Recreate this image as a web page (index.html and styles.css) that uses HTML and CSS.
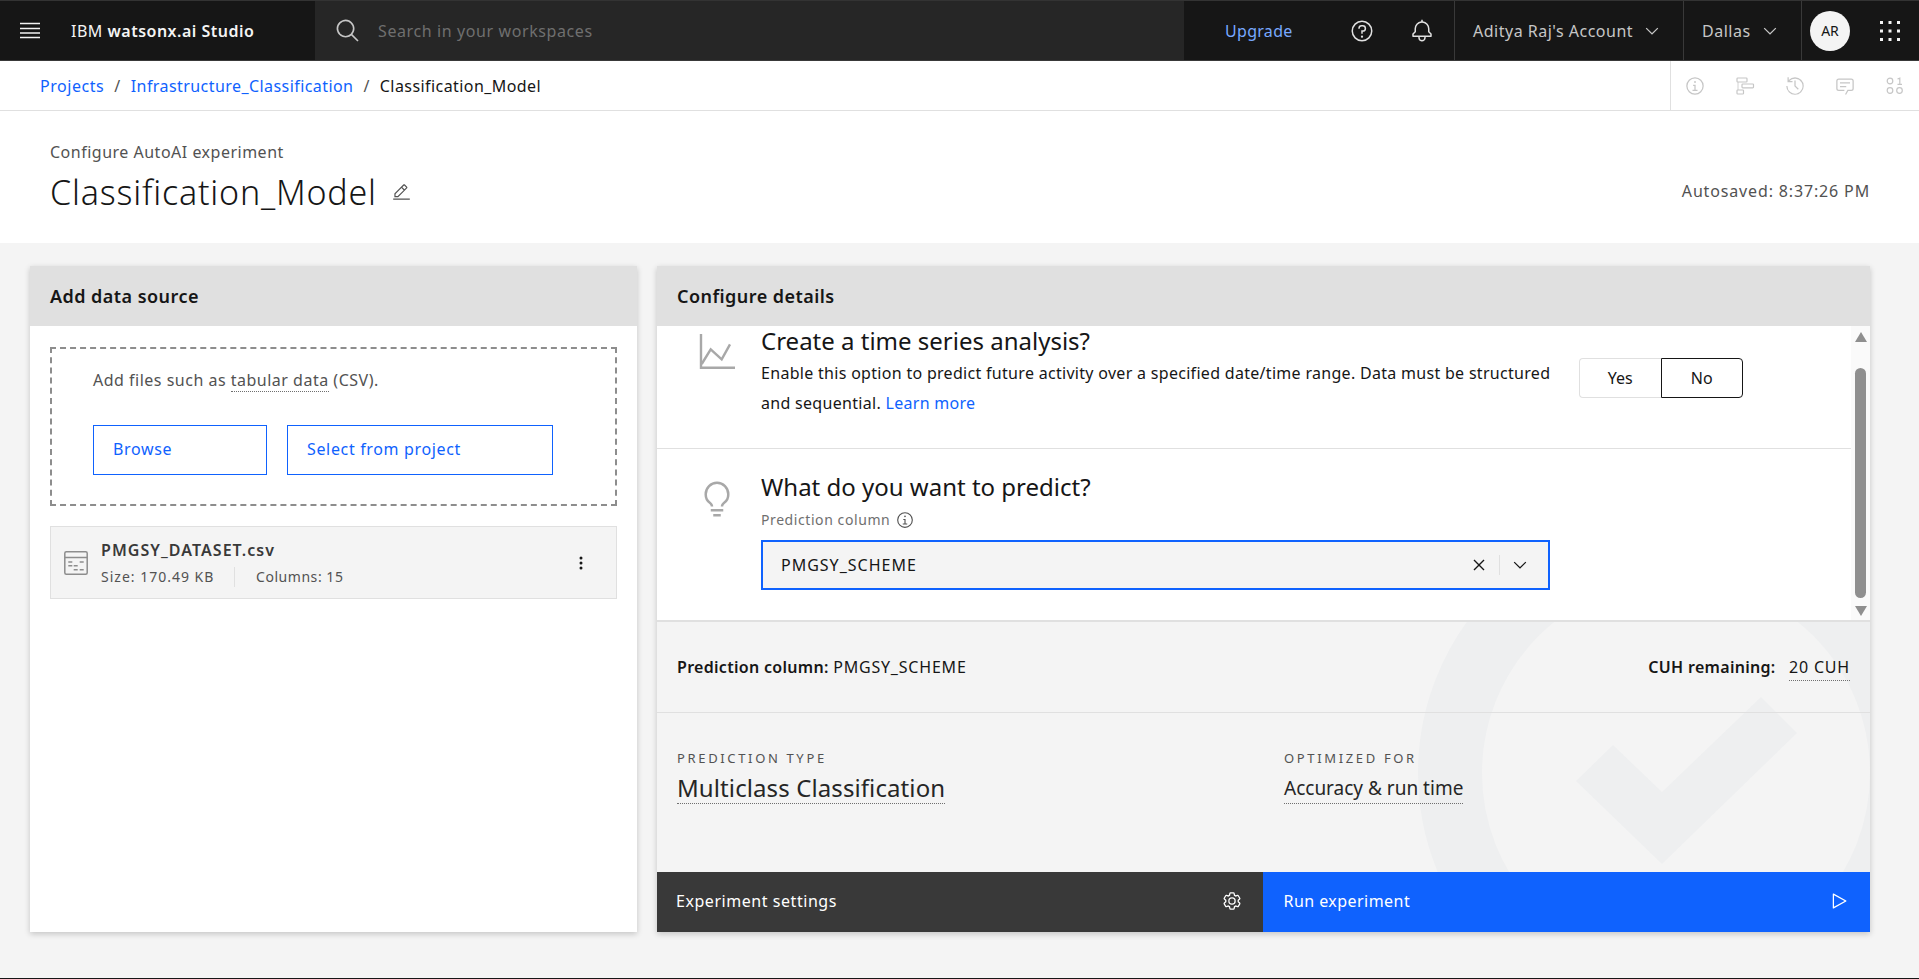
FILE: index.html
```html
<!DOCTYPE html>
<html lang="en">
<head>
<meta charset="utf-8">
<title>Configure AutoAI experiment</title>
<link rel="stylesheet" href="styles.css">
</head>
<body>
<header class="topbar">
  <div class="brand">
    <svg class="ico20" viewBox="0 0 20 20"><path d="M0 2.500h20M0 7.500h20M0 12h20M0 16.500h20" stroke="#f4f4f4" stroke-width="1.300"/></svg>
    <span class="brand-name">IBM <b>watsonx.ai Studio</b></span>
  </div>
  <div class="search">
    <svg class="ico26" viewBox="0 0 32 32" fill="#c6c6c6"><path d="M29 27.586l-7.552-7.552a11.018 11.018 0 1 0-1.414 1.414L27.586 29ZM4 13a9 9 0 1 1 9 9A9.010 9.010 0 0 1 4 13Z"/></svg>
    <span class="placeholder">Search in your workspaces</span>
  </div>
  <div class="top-right">
    <span class="upgrade">Upgrade</span>
    <svg class="ico24 help" viewBox="0 0 32 32" fill="#e0e0e0"><path d="M16,2A14,14,0,1,0,30,16,14,14,0,0,0,16,2Zm0,26A12,12,0,1,1,28,16,12,12,0,0,1,16,28Z"/><circle cx="16" cy="23.500" r="1.500"/><path d="M17,8H15.500A4.490,4.490,0,0,0,11,12.500V13h2v-.5A2.500,2.500,0,0,1,15.500,10H17a2.500,2.500,0,0,1,0,5H15v4.500h2V17a4.500,4.500,0,0,0,0-9Z"/></svg>
    <svg class="ico24 bell" viewBox="0 0 32 32" fill="#e0e0e0"><path d="M28.707,19.293,26,16.586V13a10.014,10.014,0,0,0-9-9.949V1H15V3.051A10.014,10.014,0,0,0,6,13v3.586L3.293,19.293A1,1,0,0,0,3,20v3a1,1,0,0,0,1,1h7v.777a5.152,5.152,0,0,0,4.500,5.199A5.006,5.006,0,0,0,21,25V24h7a1,1,0,0,0,1-1V20A1,1,0,0,0,28.707,19.293ZM19,25a3,3,0,0,1-6,0V24h6Zm8-3H5V20.414L7.707,17.707A1,1,0,0,0,8,17V13a8,8,0,0,1,16,0v4a1,1,0,0,0,.293.707L27,20.414Z"/></svg>
    <div class="tcell account"><span>Aditya Raj's Account</span><svg class="ico20" viewBox="0 0 32 32" fill="#c6c6c6"><path d="M16 22 6 12l1.400-1.400 8.600 8.600 8.600-8.600L26 12z"/></svg></div>
    <div class="tcell region"><span>Dallas</span><svg class="ico20" viewBox="0 0 32 32" fill="#c6c6c6"><path d="M16 22 6 12l1.400-1.400 8.600 8.600 8.600-8.600L26 12z"/></svg></div>
    <div class="tcell user"><span class="avatar">AR</span>
      <svg class="ico20 apps" viewBox="0 0 20 20" fill="#f4f4f4"><path d="M0 0h3v3H0zM8.500 0h3v3h-3zM17 0h3v3h-3zM0 8.500h3v3H0zM8.500 8.500h3v3h-3zM17 8.500h3v3h-3zM0 17h3v3H0zM8.500 17h3v3h-3zM17 17h3v3h-3z"/></svg>
    </div>
  </div>
</header>

<nav class="crumbbar">
  <div class="crumbs"><a>Projects</a><i>/</i><a>Infrastructure_Classification</a><i>/</i><span>Classification_Model</span></div>
  <div class="tools">
    <svg class="ico20" viewBox="0 0 32 32" fill="#c6c6c6"><path d="M17 22v-8h-4v2h2v6h-3v2h8v-2h-3zM16 8a1.500 1.500 0 1 0 1.500 1.500A1.500 1.500 0 0 0 16 8z"/><path d="M16 30a14 14 0 1 1 14-14 14 14 0 0 1-14 14Zm0-26a12 12 0 1 0 12 12A12 12 0 0 0 16 4Z"/></svg>
    <svg class="ico20" viewBox="0 0 20 20" fill="none" stroke="#c6c6c6" stroke-width="1.200"><rect x="2" y="2" width="10" height="4" rx=".8"/><rect x="7" y="8" width="11.500" height="3.800" rx=".8"/><rect x="2" y="14" width="6.500" height="4" rx=".8"/><path d="M3 6v8" stroke-width=".8"/></svg>
    <svg class="ico20" viewBox="0 0 32 32" fill="#c6c6c6"><path d="M20.590 22 15 16.410V7h2v8.580l5 5.010L20.590 22z"/><path d="M16 2A13.940 13.940 0 0 0 6 6.230V2H4v8h8V8H7.260A12 12 0 1 1 4 16H2A14 14 0 1 0 16 2Z"/></svg>
    <svg class="ico20" viewBox="0 0 32 32" fill="#c6c6c6"><path d="M17.740 30 16 29l4-7h6a2 2 0 0 0 2-2V8a2 2 0 0 0-2-2H6a2 2 0 0 0-2 2v12a2 2 0 0 0 2 2h9v2H6a4 4 0 0 1-4-4V8a4 4 0 0 1 4-4h20a4 4 0 0 1 4 4v12a4 4 0 0 1-4 4h-4.840Z"/><path d="M8 10h16v2H8zM8 16h10v2H8z"/></svg>
    <svg class="ico20" viewBox="0 0 20 20" fill="none" stroke="#c6c6c6" stroke-width="1.200"><circle cx="5" cy="5" r="2.800"/><path d="M12.500 3 14.800 2.200v6M12.500 8.300h4.500"/><circle cx="5" cy="14.500" r="2.800"/><circle cx="14.500" cy="14.500" r="2.800"/></svg>
  </div>
</nav>

<section class="pagehead">
  <div>
    <div class="eyebrow">Configure AutoAI experiment</div>
    <div class="titlerow">
      <h1>Classification_Model</h1>
      <svg class="ico19" viewBox="0 0 32 32" fill="#525252"><path d="M2 26h28v2H2zM25.400 9c.8-.8.8-2 0-2.800l-3.600-3.600c-.8-.8-2-.8-2.800 0l-15 15V24h6.400l15-15zm-5-5L24 7.600l-3 3L17.400 7l3-3zM6 22v-3.600l10-10 3.600 3.600-10 10H6z"/></svg>
    </div>
  </div>
  <div class="autosaved">Autosaved: 8:37:26 PM</div>
</section>

<main class="workspace">
  <section class="card left">
    <h2 class="cardhead">Add data source</h2>
    <div class="leftbody">
      <div class="dropzone">
        <p>Add files such as <span class="dotted">tabular data</span> (CSV).</p>
        <div class="btns"><button class="ghost browse">Browse</button><button class="ghost select">Select from project</button></div>
      </div>
      <div class="file">
        <svg class="fileicon" viewBox="0 0 24 24" fill="none" stroke="#8d8d8d" stroke-width="1.500"><rect x=".8" y=".8" width="22.400" height="22.400" rx="1.500"/><path d="M1 6.500h22"/><path d="M4.300 11h4M15.700 11h4M4.300 14.800h4M9.700 14.800h4M9.700 18.800h4M15.700 18.800h4"/></svg>
        <div class="fileinfo">
          <div class="fname">PMGSY_DATASET.csv</div>
          <div class="fmeta"><span class="fsize">Size: 170.49 KB</span><span class="fcols">Columns: 15</span></div>
        </div>
        <svg class="ico20 kebab" viewBox="0 0 32 32" fill="#161616"><circle cx="16" cy="8" r="2.400"/><circle cx="16" cy="16" r="2.400"/><circle cx="16" cy="24" r="2.400"/></svg>
      </div>
    </div>
  </section>

  <section class="card right">
    <h2 class="cardhead">Configure details</h2>
    <div class="scroller">
      <div class="scrollcontent">
        <div class="opt first">
          <svg class="opticon chart" viewBox="0 0 36 36" fill="none" stroke="#a8a8a8" stroke-width="2.400"><path d="M2 0v33.700h34"/><path d="M2.700 30 11.700 15.300 22.700 25.300 31 10.300"/></svg>
          <div class="optmain">
            <h3>Create a time series analysis?</h3>
            <p>Enable this option to predict future activity over a specified date/time range. Data must be structured<br>and sequential. <a>Learn more</a></p>
          </div>
          <div class="toggle"><span class="yes">Yes</span><span class="no">No</span></div>
        </div>
        <div class="opt second">
          <svg class="bulb" viewBox="0 0 32 32" fill="#a8a8a8"><path d="M11 24h10v2H11zm2 4h6v2h-6zm3-26A10 10 0 0 0 6 12a9.190 9.190 0 0 0 3.460 7.620c1 .93 1.540 1.460 1.540 2.380h2c0-1.840-1.110-2.870-2.190-3.860A7.200 7.200 0 0 1 8 12a8 8 0 0 1 16 0 7.200 7.200 0 0 1-2.820 6.140c-1.070 1-2.180 2-2.180 3.860h2c0-.92.53-1.450 1.540-2.390A9.180 9.180 0 0 0 26 12 10 10 0 0 0 16 2Z"/></svg>
          <div class="optmain">
            <h3>What do you want to predict?</h3>
            <div class="fieldlabel">Prediction column
              <svg class="ico18" viewBox="0 0 32 32" fill="#525252"><path d="M17 22v-8h-4v2h2v6h-3v2h8v-2h-3zM16 8a1.500 1.500 0 1 0 1.500 1.500A1.500 1.500 0 0 0 16 8z"/><path d="M16 30a14 14 0 1 1 14-14 14 14 0 0 1-14 14Zm0-26a12 12 0 1 0 12 12A12 12 0 0 0 16 4Z"/></svg>
            </div>
            <div class="combo">
              <span class="comboval">PMGSY_SCHEME</span>
              <svg class="ico22" viewBox="0 0 32 32" fill="#161616"><path d="M17.414 16 24 9.414 22.586 8 16 14.586 9.414 8 8 9.414 14.586 16 8 22.586 9.414 24 16 17.414 22.586 24 24 22.586 17.414 16z"/></svg>
              <span class="combosep"></span>
              <svg class="ico20 combochev" viewBox="0 0 32 32" fill="#161616"><path d="M16 22 6 12l1.400-1.400 8.600 8.600 8.600-8.600L26 12z"/></svg>
            </div>
          </div>
        </div>
      </div>
      <div class="scrollbar">
        <span class="arrow up"></span>
        <span class="thumb"></span>
        <span class="arrow down"></span>
      </div>
    </div>
    <div class="summary">
      <svg class="watermark" viewBox="0 0 1213 250"><circle cx="1019" cy="151" r="226" fill="none" stroke="#eeeff0" stroke-width="64"/><path d="M1104 75l36 36-135 131-86-83 37-36 49 47z" fill="#eeeff0"/></svg>
      <div class="sumrow">
        <div><b>Prediction column:</b> <span class="mono">PMGSY_SCHEME</span></div>
        <div class="cuh"><b>CUH remaining:</b> <span class="dotted mono">20 CUH</span></div>
      </div>
      <div class="sumgrid">
        <div class="sumcol">
          <div class="sumlabel">PREDICTION TYPE</div>
          <div class="sumvalue big"><span class="dotted">Multiclass Classification</span></div>
        </div>
        <div class="sumcol">
          <div class="sumlabel">OPTIMIZED FOR</div>
          <div class="sumvalue"><span class="dotted">Accuracy &amp; run time</span></div>
        </div>
      </div>
    </div>
    <div class="actions">
      <button class="action settings"><span>Experiment settings</span>
        <svg class="ico20" viewBox="0 0 32 32" fill="#fff"><path d="M27,16.760c0-.25,0-.5,0-.76s0-.51,0-.77l1.920-1.680A2,2,0,0,0,29.300,11L26.940,7a2,2,0,0,0-1.730-1,2,2,0,0,0-.64.1l-2.430.82a11.350,11.350,0,0,0-1.310-.75l-.51-2.520a2,2,0,0,0-2-1.610H13.640a2,2,0,0,0-2,1.610l-.51,2.520a11.480,11.480,0,0,0-1.320.75L7.430,6.060A2,2,0,0,0,6.790,6,2,2,0,0,0,5.060,7L2.700,11a2,2,0,0,0,.41,2.510L5,15.240c0,.25,0,.5,0,.76s0,.51,0,.77L3.110,18.450A2,2,0,0,0,2.700,21L5.060,25a2,2,0,0,0,1.730,1,2,2,0,0,0,.64-.1l2.430-.82a11.350,11.350,0,0,0,1.310.75l.51,2.520a2,2,0,0,0,2,1.610h4.720a2,2,0,0,0,2-1.610l.51-2.520a11.480,11.480,0,0,0,1.320-.75l2.420.82a2,2,0,0,0,.64.1,2,2,0,0,0,1.730-1L29.300,21a2,2,0,0,0-.41-2.510ZM25.210,24l-3.430-1.160a8.860,8.860,0,0,1-2.710,1.570L18.360,28H13.640l-.71-3.550a9.360,9.360,0,0,1-2.700-1.570L6.790,24,4.430,20l2.720-2.400a8.900,8.900,0,0,1,0-3.130L4.430,12,6.790,8l3.430,1.160a8.860,8.860,0,0,1,2.710-1.570L13.640,4h4.720l.71,3.550a9.360,9.360,0,0,1,2.700,1.570L25.210,8,27.570,12l-2.720,2.400a8.900,8.900,0,0,1,0,3.130L27.570,20Z"/><path d="M16,22a6,6,0,1,1,6-6A5.940,5.940,0,0,1,16,22Zm0-10a3.910,3.910,0,0,0-4,4,3.910,3.910,0,0,0,4,4,3.910,3.910,0,0,0,4-4A3.910,3.910,0,0,0,16,12Z"/></svg>
      </button>
      <button class="action run"><span>Run experiment</span>
        <svg class="ico20" viewBox="0 0 32 32" fill="#fff"><path d="M7 28a1 1 0 0 1-1-1V5a1 1 0 0 1 1.482-.876l20 11a1 1 0 0 1 0 1.752l-20 11A1 1 0 0 1 7 28ZM8 6.691v18.618L24.925 16Z"/></svg>
      </button>
    </div>
  </section>
</main>
</body>
</html>
```
FILE: styles.css
```css
* { box-sizing: border-box; }
html, body { margin: 0; height: 979px; overflow: hidden; }
body {
  display: flex; flex-direction: column;
  font-family: "Noto Sans", "Open Sans", sans-serif;
  font-size: 16px; letter-spacing: .5px; color: #161616; background: #f4f4f4;
  border-bottom: 1px solid #161616;
}
h1, h2, h3, p { margin: 0; font-weight: 400; }
button { font: inherit; letter-spacing: inherit; background: none; border: 0; padding: 0; text-align: left; }
svg { display: block; flex: none; }
.ico18 { width: 18px; height: 18px; }
.ico19 { width: 19px; height: 19px; }
.ico20 { width: 20px; height: 20px; }
.ico22 { width: 22px; height: 22px; }
.ico24 { width: 24px; height: 24px; }
.ico26 { width: 26px; height: 26px; }

.topbar { height: 61px; flex: none; display: flex; background: #161616; border-top: 1px solid #333; border-bottom: 1px solid #393939; color: #f4f4f4; }
.brand { width: 315px; display: flex; align-items: center; padding-left: 20px; gap: 31px; }
.brand-name { white-space: nowrap; }
.brand-name b { font-weight: 600; }
.search { width: 869px; background: #262626; display: flex; align-items: center; padding-left: 20px; gap: 17px; }
.placeholder { color: #6f6f6f; letter-spacing: .6px; white-space: nowrap; }
.top-right { flex: 1; display: flex; align-items: center; height: 100%; padding-left: 41px; }
.upgrade { color: #78a9ff; width: 66px; letter-spacing: .3px; white-space: nowrap; }
.help { margin-left: 59px; }
.bell { margin-left: 36px; }
.tcell { height: 100%; display: flex; align-items: center; border-left: 1px solid #393939; color: #c6c6c6; white-space: nowrap; }
.account { margin-left: 20px; width: 229px; padding-left: 18px; gap: 9px; }
.account span { width: 160px; }
.region { width: 118px; padding-left: 18px; gap: 10px; }
.region span { width: 48px; }
.user { flex: 1; padding-left: 8px; }
.avatar { width: 40px; height: 40px; border-radius: 50%; background: #f4f4f4; color: #161616; display: flex; align-items: center; justify-content: center; font-size: 14px; letter-spacing: 0; }
.apps { margin-left: 30px; }

.crumbbar { height: 50px; flex: none; display: flex; justify-content: space-between; background: #fff; border-bottom: 1px solid #e0e0e0; }
.crumbs { display: flex; align-items: center; padding-left: 40px; white-space: nowrap; letter-spacing: .43px; }
.crumbs a:first-child { letter-spacing: .55px; }
.crumbs a { color: #0f62fe; }
.crumbs i { font-style: normal; color: #525252; margin: 0 10px; }
.tools { width: 249px; border-left: 1px solid #e0e0e0; display: flex; align-items: center; padding-left: 14px; gap: 30px; }

.pagehead { height: 132px; flex: none; background: #fff; display: flex; justify-content: space-between; align-items: center; padding: 0 49px 0 50px; }
.eyebrow { color: #525252; line-height: 22px; }
.titlerow { display: flex; align-items: center; gap: 15px; margin-top: 8px; }
h1 { font-size: 34px; line-height: 42px; font-weight: 300; letter-spacing: .8px; white-space: nowrap; }
.autosaved { color: #525252; margin-top: 28px; letter-spacing: .85px; }

.workspace { flex: 1; display: flex; gap: 20px; padding: 23px 49px 46px 30px; min-height: 0; }
.card { display: flex; flex-direction: column; background: #fff; box-shadow: 0 2px 6px rgba(0,0,0,.2); }
.left { width: 607px; flex: none; }
.right { flex: 1; min-width: 0; }
.cardhead { height: 60px; flex: none; background: #e0e0e0; font-size: 18px; font-weight: 600; line-height: 60px; letter-spacing: .45px; padding-left: 20px; }

.leftbody { padding: 21px 20px; }
.dropzone { height: 159px; border: 2px dashed #8d8d8d; padding: 19px 0 0 41px; color: #525252; }
.dropzone p { line-height: 24px; }
.dotted { border-bottom: 1px dotted #6f6f6f; }
.btns { display: flex; gap: 20px; margin-top: 33px; }
.ghost { height: 50px; border: 1px solid #0f62fe; color: #0f62fe; padding: 0 0 3px 19px; letter-spacing: .65px; }
.browse { width: 174px; }
.select { width: 266px; }
.file { height: 73px; margin-top: 20px; background: #f4f4f4; border: 1px solid #e0e0e0; display: flex; align-items: center; padding-left: 13px; }
.fileicon { width: 24px; height: 24px; }
.fileinfo { margin-left: 13px; flex: 1; }
.fname { font-weight: 600; color: #393939; line-height: 22px; letter-spacing: 1.05px; }
.fmeta { display: flex; margin-top: 6px; font-size: 14px; color: #525252; line-height: 20px; }
.fsize { width: 134px; margin-right: 21px; border-right: 1px solid #e0e0e0; letter-spacing: 1px; }
.fcols { letter-spacing: .55px; }
.kebab { margin-right: 25px; }

.scroller { height: 296px; flex: none; display: flex; overflow: hidden; border-bottom: 2px solid #e0e0e0; }
.scrollcontent { flex: 1; min-width: 0; }
.opt { display: flex; }
.first { height: 123px; border-bottom: 1px solid #e0e0e0; }
.second { padding-top: 23px; }
.opticon { margin-left: 42px; }
.chart { width: 36px; height: 36px; margin-top: 8px; }
.bulb { width: 40px; height: 40px; margin: 7px 0 0 40px; }
.optmain { margin-left: 26px; width: 789px; flex: none; }
.second .optmain { margin-left: 24px; }
h3 { font-size: 24px; line-height: 30px; letter-spacing: 0; white-space: nowrap; }
.first p { line-height: 30px; margin-top: 2px; letter-spacing: .3px; white-space: nowrap; }
.first p a { color: #0f62fe; }
.toggle { display: flex; width: 164px; height: 40px; margin: 32px 0 0 29px; }
.toggle span { flex: 1; display: flex; align-items: center; justify-content: center; letter-spacing: 0; }
.yes { border: 1px solid #e0e0e0; border-right: 0; border-radius: 4px 0 0 4px; }
.no { border: 1px solid #161616; border-radius: 0 4px 4px 0; }
.fieldlabel { display: flex; align-items: center; gap: 6px; margin-top: 9px; font-size: 14px; line-height: 18px; letter-spacing: .58px; color: #6f6f6f; }
.combo { margin-top: 11px; width: 789px; height: 50px; border: 2px solid #0f62fe; background: #f4f4f4; display: flex; align-items: center; padding-left: 18px; }
.comboval { flex: 1; letter-spacing: 1px; }
.combosep { width: 1px; height: 20px; background: #e0e0e0; margin: 0 10px 0 9px; }
.combochev { margin-right: 18px; }

.scrollbar { width: 19px; flex: none; background: #fafafa; display: flex; flex-direction: column; align-items: center; }
.thumb { width: 11px; height: 230px; margin: 26px 0 8px; border-radius: 6px; background: #8f8f8f; }
.arrow { width: 0; height: 0; border-left: 6px solid transparent; border-right: 6px solid transparent; }
.arrow.up { margin-top: 6px; border-bottom: 10px solid #8f8f8f; }
.arrow.down { border-top: 10px solid #8f8f8f; }

.summary { flex: 1; min-height: 0; position: relative; overflow: hidden; background: #f4f4f4; }
.watermark { position: absolute; left: 0; top: 0; width: 1213px; height: 250px; }
.sumrow { position: relative; height: 91px; border-bottom: 1px solid #e0e0e0; display: flex; justify-content: space-between; align-items: center; padding: 0 20px; letter-spacing: .3px; }
.sumrow b { font-weight: 600; }
.mono { letter-spacing: .8px; }
.cuh .dotted { margin-left: 9px; padding-bottom: 2px; }
.sumgrid { position: relative; display: grid; grid-template-columns: 607px 1fr; padding: 36px 0 0 20px; }
.sumlabel { font-size: 13px; letter-spacing: 2.65px; color: #525252; line-height: 18px; }
.sumvalue { font-size: 19px; line-height: 28px; margin-top: 7px; letter-spacing: 0; color: #262626; }
.sumvalue.big { font-size: 24px; letter-spacing: .1px; }
.sumvalue .dotted { display: inline-block; padding-bottom: 1px; }

.actions { height: 60px; flex: none; display: flex; }
.action { flex: 1; display: flex; align-items: center; justify-content: space-between; color: #fff; padding: 0 21px 2px 19px; letter-spacing: .55px; }
.settings { background: #393939; }
.run { background: #0f62fe; padding-left: 21px; letter-spacing: .45px; }
```
